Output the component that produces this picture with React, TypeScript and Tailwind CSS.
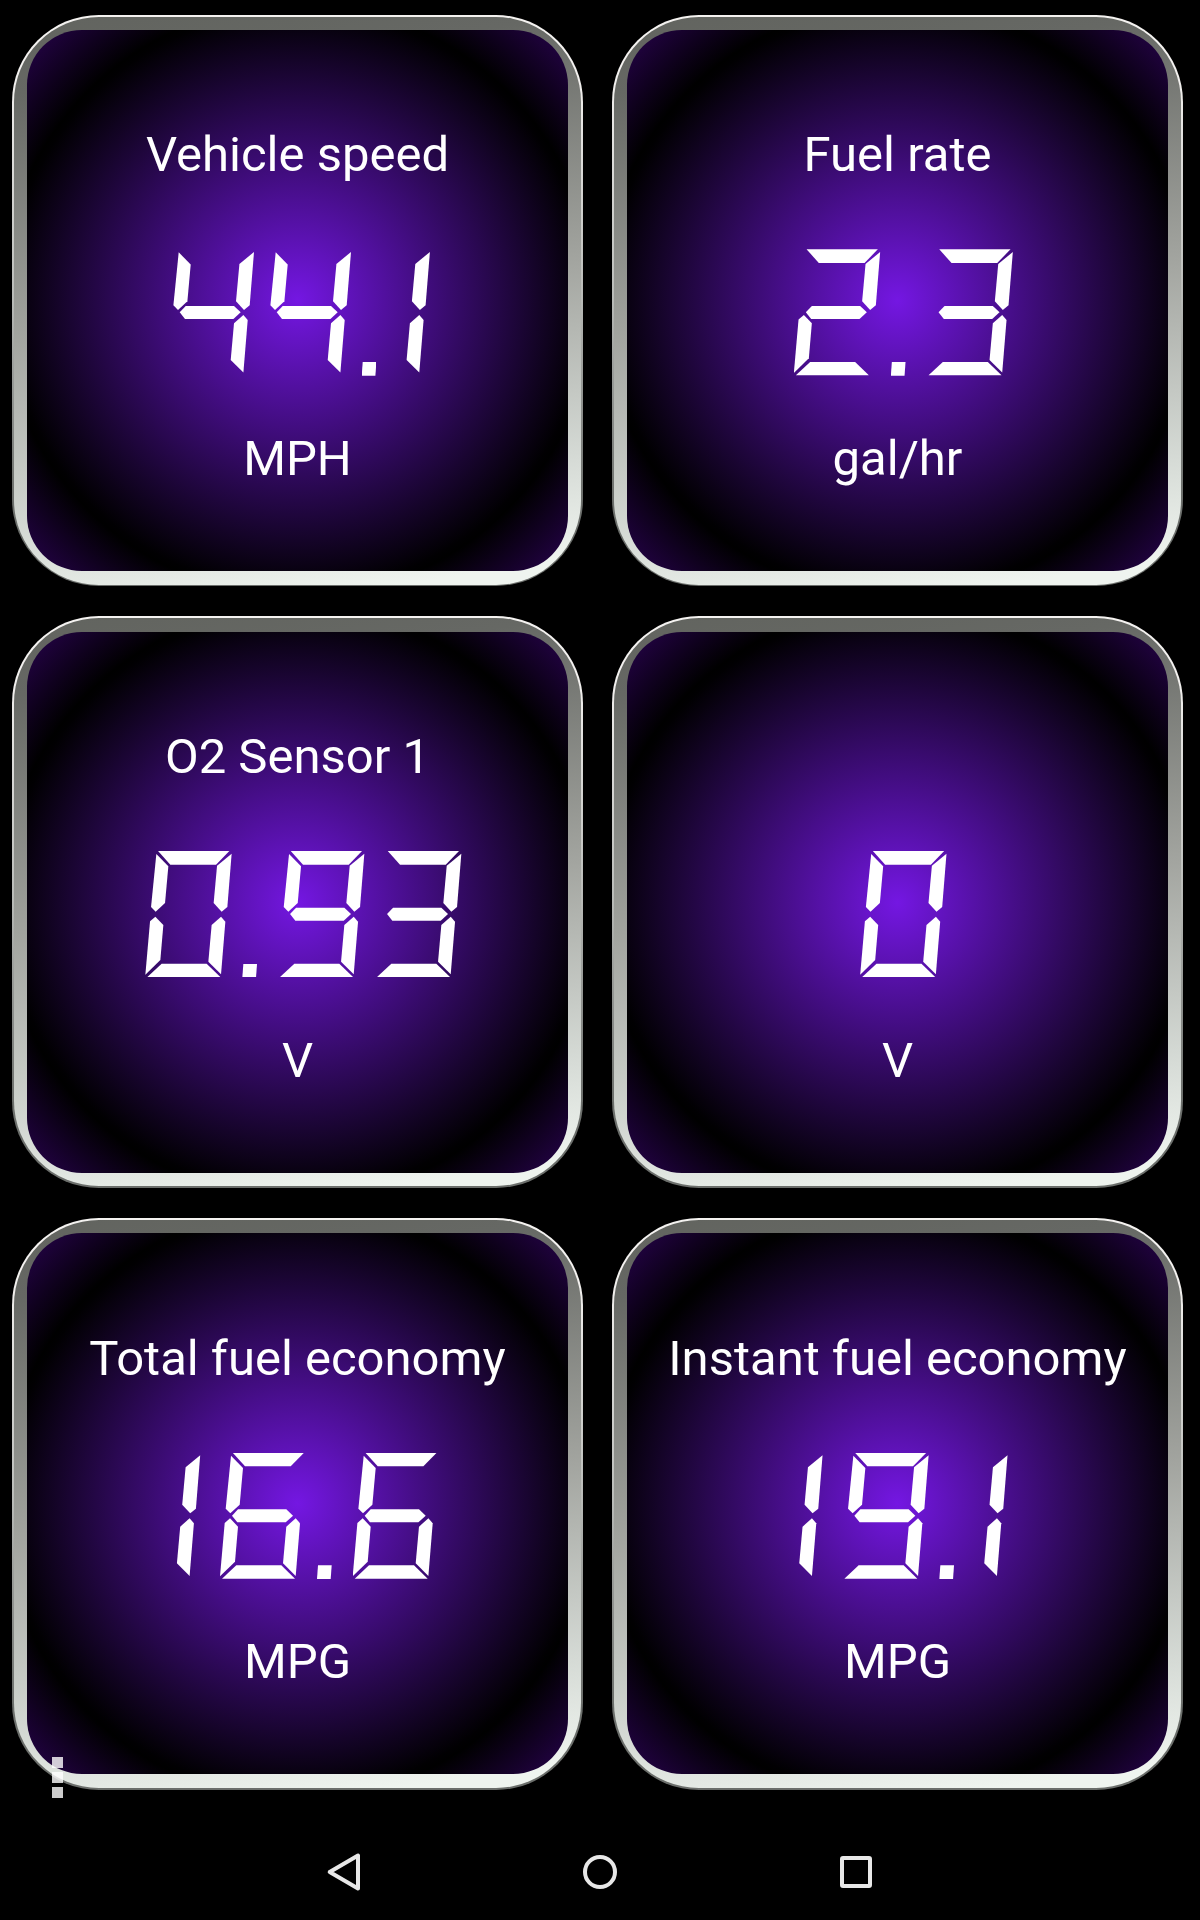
import clsx from 'clsx'

type Gauge = {
  label: string
  value: string
  unit: string
}

const gauges: Gauge[] = [
  { label: 'Vehicle speed', value: '44.1', unit: 'MPH' },
  { label: 'Fuel rate', value: '2.3', unit: 'gal/hr' },
  { label: 'O2 Sensor 1', value: '0.93', unit: 'V' },
  { label: '', value: '0', unit: 'V' },
  { label: 'Total fuel economy', value: '16.6', unit: 'MPG' },
  { label: 'Instant fuel economy', value: '19.1', unit: 'MPG' },
]

// a = top, then clockwise, g = middle bar
const segmentShape: Record<string, string> = {
  a: '[clip-path:polygon(12.7px_0px,84px_0px,70.7px_13.7px,25px_13.7px)]',
  b: '[clip-path:polygon(86.3px_2.7px,82px_56px,76.3px_60.7px,68.3px_52px,71.7px_14.7px)]',
  c: '[clip-path:polygon(75.7px_65.7px,80px_70.7px,75.7px_123.3px,63px_110.7px,66.3px_74px)]',
  d: '[clip-path:polygon(16.3px_112.7px,61.3px_112.7px,75px_126px,2px_126px)]',
  e: '[clip-path:polygon(10px_65.7px,18px_74px,15px_109px,0px_123.7px,4.7px_70.3px)]',
  f: '[clip-path:polygon(11px_3px,23px_15.3px,19.7px_52px,10.3px_60.7px,5.7px_56px)]',
  g: '[clip-path:polygon(12px_63px,18px_56.7px,66.3px_56.7px,73px_63px,65.7px_69.7px,17.3px_69.7px)]',
}

const litSegments: Record<string, string> = {
  '0': 'abcdef',
  '1': 'bc',
  '2': 'abged',
  '3': 'abgcd',
  '4': 'fgbc',
  '5': 'afgcd',
  '6': 'afgedc',
  '7': 'abc',
  '8': 'abcdefg',
  '9': 'abfgcd',
}

function Digit({ char }: { char: string }) {
  if (char === '.') {
    return (
      <span className="relative h-[127px] w-[35.7px]">
        <span className="absolute top-[112.7px] left-0 h-[13.7px] w-[14.7px] bg-white [clip-path:polygon(1px_0px,100%_0px,13.7px_100%,0px_100%)]" />
      </span>
    )
  }

  return (
    <span
      className={clsx(
        'relative h-[127px]',
        char === '1' ? 'w-[52.3px]' : 'w-[97px]'
      )}
    >
      {litSegments[char].split('').map((s) => (
        <span
          key={s}
          className={clsx(
            'absolute top-0 h-[127px] w-[97px] bg-white',
            char === '1' ? 'left-[-53.8px]' : 'left-0',
            segmentShape[s]
          )}
        />
      ))}
    </span>
  )
}

function SegmentDisplay({ value }: { value: string }) {
  return (
    <div
      role="img"
      aria-label={value}
      className="mt-[66px] flex h-[127px] justify-center pl-[22.4px]"
    >
      {value.split('').map((char, i) => (
        <Digit key={i} char={char} />
      ))}
    </div>
  )
}

function GaugeCard({ label, value, unit }: Gauge) {
  return (
    <div className="h-[571.5px] w-[571px] rounded-[87px] bg-linear-to-b from-[#f4f2f0] from-10% via-[#b8bab7] via-50% to-[#6b6e6b] to-85% p-[1.8px]">
      <div className="h-full rounded-[85px] bg-[linear-gradient(172deg,#62645f_0%,#666864_12%,#a3a5a0_50%,#d5dad5_80%,#eff4ef_96%)] p-[13.4px]">
        <div className="h-full rounded-[55px] bg-[radial-gradient(circle_at_center,#7417e2_0px,#010002_290px,#000000_296px,#20023f_365px)] pt-[96.3px] text-center font-['Roboto',sans-serif] text-[49px] leading-[57px] whitespace-nowrap text-white">
          <div className="h-[57px]">{label}</div>
          <SegmentDisplay value={value} />
          <div className="mt-[53.8px] h-[57px]">{unit}</div>
        </div>
      </div>
    </div>
  )
}

function NavBar() {
  return (
    <nav className="flex h-24 justify-center">
      <button aria-label="Back" className="flex w-64 items-center justify-center">
        <svg width="40" height="40" viewBox="0 0 40 40" fill="none" stroke="#e8e8e8" strokeWidth="4" strokeLinejoin="round">
          <path d="M34 3.5V36.5L5.7 20Z" />
        </svg>
      </button>
      <button aria-label="Home" className="flex w-64 items-center justify-center">
        <span className="size-[34px] rounded-full border-4 border-[#e8e8e8]" />
      </button>
      <button aria-label="Recent apps" className="flex w-64 items-center justify-center">
        <span className="size-8 rounded-[3px] border-4 border-[#e8e8e8]" />
      </button>
    </nav>
  )
}

export default function App() {
  return (
    <div className="relative flex h-[1920px] w-[1200px] flex-col justify-between overflow-hidden bg-black">
      <main className="grid grid-cols-[571px_571px] gap-x-[29px] gap-y-[30.2px] pt-[14.8px] pl-3">
        {gauges.map((gauge, i) => (
          <GaugeCard key={i} {...gauge} />
        ))}
      </main>

      {/* overflow menu, floats over the last row */}
      <button
        aria-label="More options"
        className="absolute top-[1757px] left-[52px] flex flex-col gap-[4.5px]"
      >
        <span className="size-[10.6px] bg-white/80" />
        <span className="size-[10.6px] bg-white/80" />
        <span className="size-[10.6px] bg-white/80" />
      </button>

      <NavBar />
    </div>
  )
}
